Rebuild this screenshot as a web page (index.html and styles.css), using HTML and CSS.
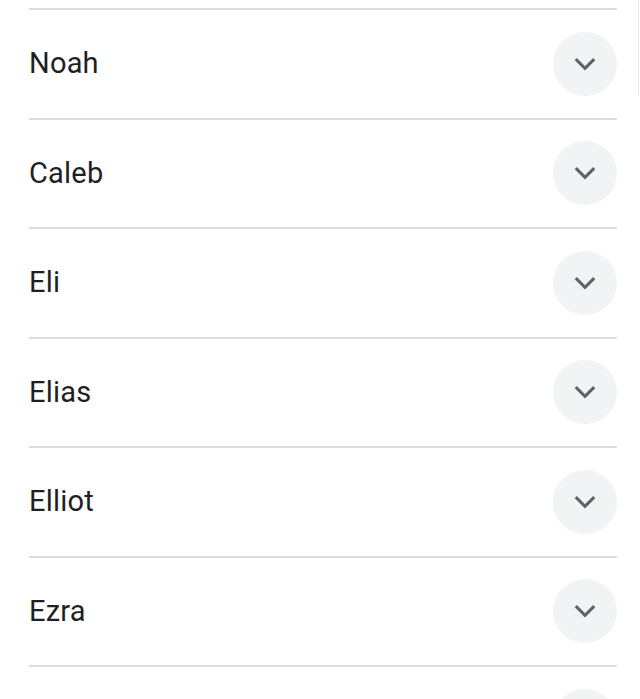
FILE: index.html
```html
<!DOCTYPE html>
<html>
<head>
<meta charset="utf-8">
<link rel="stylesheet" href="styles.css">
</head>
<body>
<div class="edge"></div>
<ul class="list">
  <li class="row"><span class="name">Noah</span><button class="toggle"><svg viewBox="0 0 24 24" width="26" height="26"><path d="M3.5 7.5l8.5 8.5 8.5-8.5" fill="none" stroke="#5f6368" stroke-width="2.8"/></svg></button></li>
  <li class="row"><span class="name">Caleb</span><button class="toggle"><svg viewBox="0 0 24 24" width="26" height="26"><path d="M3.5 7.5l8.5 8.5 8.5-8.5" fill="none" stroke="#5f6368" stroke-width="2.8"/></svg></button></li>
  <li class="row"><span class="name">Eli</span><button class="toggle"><svg viewBox="0 0 24 24" width="26" height="26"><path d="M3.5 7.5l8.5 8.5 8.5-8.5" fill="none" stroke="#5f6368" stroke-width="2.8"/></svg></button></li>
  <li class="row"><span class="name">Elias</span><button class="toggle"><svg viewBox="0 0 24 24" width="26" height="26"><path d="M3.5 7.5l8.5 8.5 8.5-8.5" fill="none" stroke="#5f6368" stroke-width="2.8"/></svg></button></li>
  <li class="row"><span class="name">Elliot</span><button class="toggle"><svg viewBox="0 0 24 24" width="26" height="26"><path d="M3.5 7.5l8.5 8.5 8.5-8.5" fill="none" stroke="#5f6368" stroke-width="2.8"/></svg></button></li>
  <li class="row"><span class="name">Ezra</span><button class="toggle"><svg viewBox="0 0 24 24" width="26" height="26"><path d="M3.5 7.5l8.5 8.5 8.5-8.5" fill="none" stroke="#5f6368" stroke-width="2.8"/></svg></button></li>
  <li class="row"><span class="name"></span><button class="toggle"><svg viewBox="0 0 24 24" width="26" height="26"><path d="M3.5 7.5l8.5 8.5 8.5-8.5" fill="none" stroke="#5f6368" stroke-width="2.8"/></svg></button></li>
</ul>
</body>
</html>
```
FILE: styles.css
```css
html, body {
  margin: 0;
  padding: 0;
  background: #ffffff;
  overflow: hidden;
  height: 699px;
}
body {
  font-family: Roboto, "Liberation Sans", sans-serif;
  color: #1f1f1f;
  position: relative;
}
.edge {
  position: absolute;
  right: 1px;
  top: 0;
  width: 1px;
  height: 96px;
  background: #e6e6e6;
}
.list {
  list-style: none;
  margin: 0;
  padding: 8px 23px 0 29px;
}
.row {
  display: flex;
  align-items: center;
  justify-content: space-between;
  height: 107.5px;
  border-top: 2px solid #dadce0;
}
.name {
  font-size: 29px;
  line-height: 1;
  letter-spacing: 0.2px;
}
.toggle {
  width: 64px;
  height: 64px;
  border-radius: 50%;
  border: 0;
  padding: 0;
  background: #f1f3f4;
  display: flex;
  align-items: center;
  justify-content: center;
}
```
